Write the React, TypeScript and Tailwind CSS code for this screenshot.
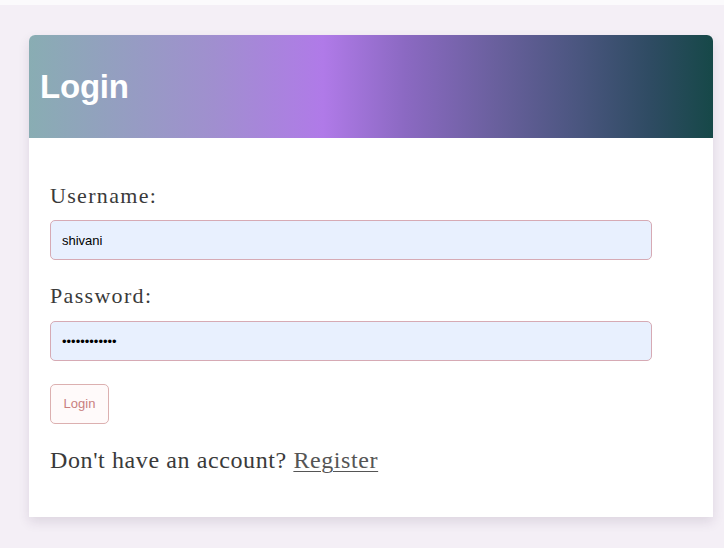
export default function App() {
  return (
    <div className="min-h-[548px] w-[724px] bg-[#f4eff6]">
      <div className="h-[5px] bg-[#fbfafc]" />
      <div className="ml-[29px] mt-[30px] w-[684px] rounded-t-[6px] bg-white shadow-[0_5px_12px_rgba(60,30,70,0.12)]">
        <div className="flex h-[103px] items-center rounded-t-[6px] bg-[linear-gradient(90deg,#89adb3_0%,#a08fcf_27%,#b07ae8_43%,#8b69c2_55%,#6a609e_68%,#4b5680_80%,#2e4b62_91%,#164848_100%)] pl-[11px]">
          <h1 className="font-['Liberation_Sans',Arial,sans-serif] text-[33px] font-bold leading-none tracking-[-0.2px] text-white">
            Login
          </h1>
        </div>
        <div className="px-[21px] pb-[43px] pt-[45px] font-['Liberation_Serif','Times_New_Roman',serif] text-[#3a3a3a]">
          <label className="mb-3 block text-[22px] leading-[25px] tracking-[0.06em]">Username:</label>
          <input
            readOnly
            value="shivani"
            className="block h-[40px] w-[602px] rounded-[5px] border border-[#d6aab4] bg-[#e8f0fe] px-[11px] font-['Liberation_Sans',Arial,sans-serif] text-[13px] text-black outline-none"
          />
          <label className="mb-[13px] mt-[23px] block text-[22px] leading-[25px] tracking-[0.06em]">Password:</label>
          <input
            readOnly
            type="password"
            value="shivani12345"
            className="block h-[40px] w-[602px] rounded-[5px] border border-[#d6aab4] bg-[#e8f0fe] px-[11px] font-['Liberation_Sans',Arial,sans-serif] text-[13px] text-black outline-none"
          />
          <button className="mt-[23px] block h-[40px] w-[59px] rounded-[5px] border border-[#dcb0b0] bg-[#fffafa] font-['Liberation_Sans',Arial,sans-serif] text-[13px] text-[#c97f7f]">
            Login
          </button>
          <p className="mt-[22px] text-[24px] leading-[28px] tracking-[0.025em] text-[#3a3a3a]">
            Don't have an account?{" "}
            <a href="#" className="text-[#555] underline decoration-1 underline-offset-[3px]">
              Register
            </a>
          </p>
        </div>
      </div>
    </div>
  );
}
